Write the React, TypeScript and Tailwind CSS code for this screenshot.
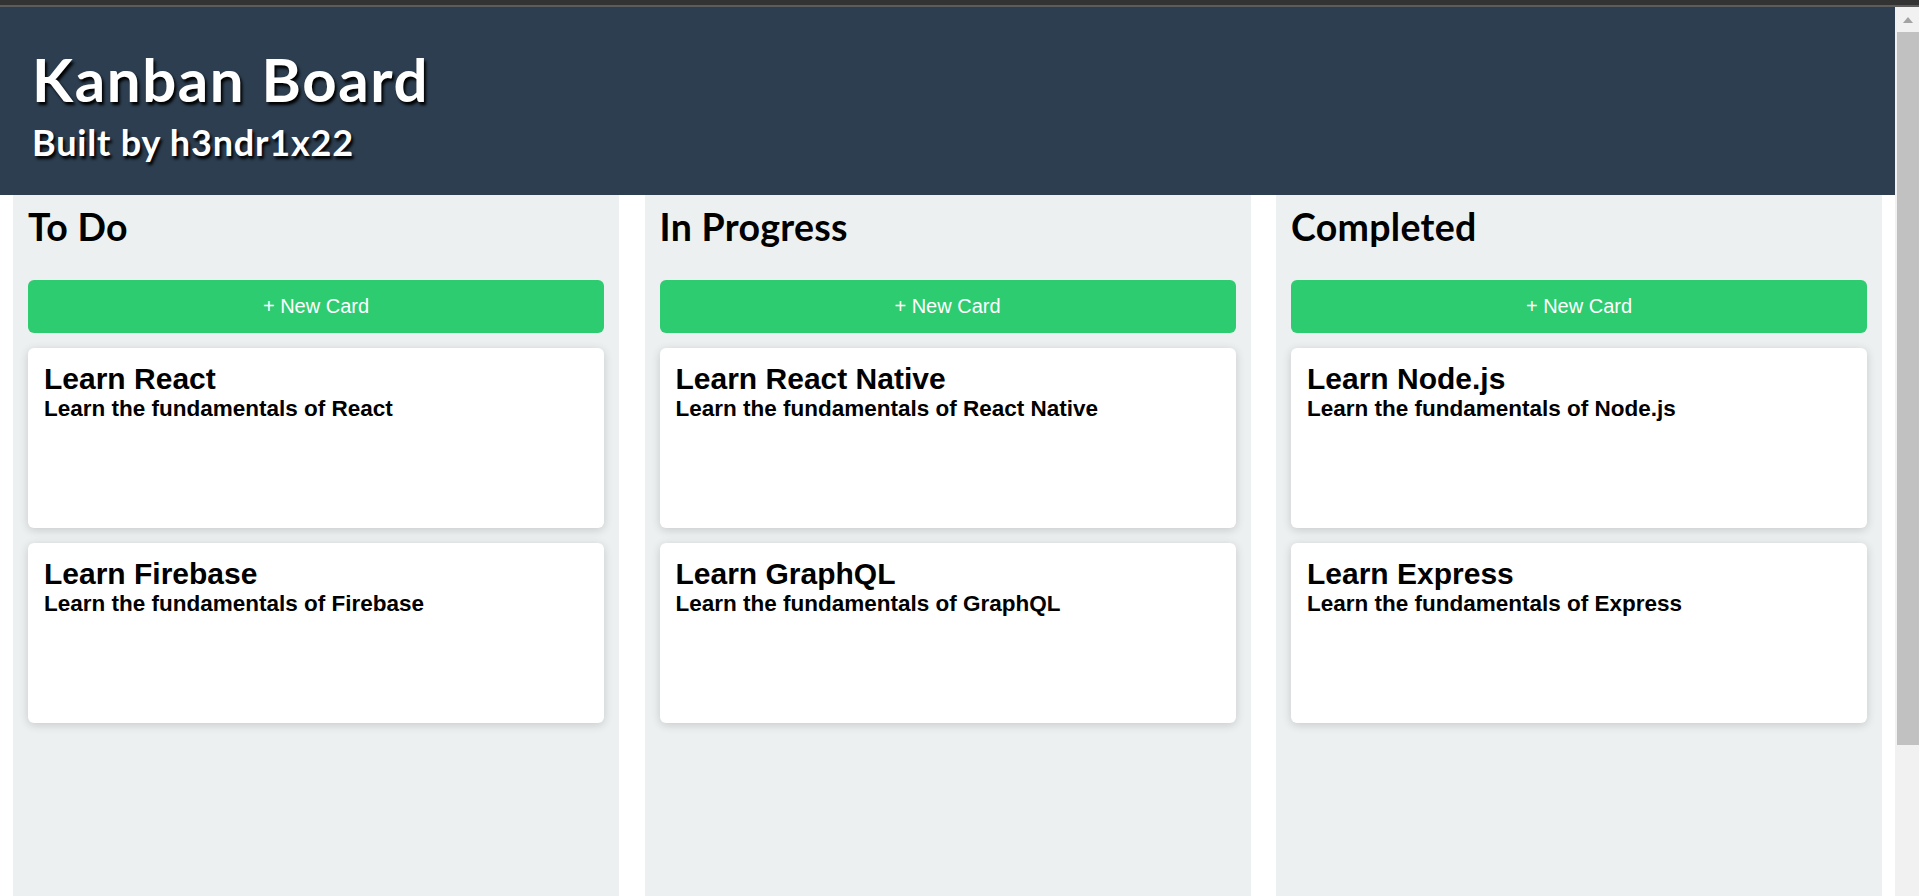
import React from 'react';

type Card = { title: string; description: string };
type Column = { name: string; cards: Card[] };

const columns: Column[] = [
  {
    name: 'To Do',
    cards: [
      { title: 'Learn React', description: 'Learn the fundamentals of React' },
      { title: 'Learn Firebase', description: 'Learn the fundamentals of Firebase' },
    ],
  },
  {
    name: 'In Progress',
    cards: [
      { title: 'Learn React Native', description: 'Learn the fundamentals of React Native' },
      { title: 'Learn GraphQL', description: 'Learn the fundamentals of GraphQL' },
    ],
  },
  {
    name: 'Completed',
    cards: [
      { title: 'Learn Node.js', description: 'Learn the fundamentals of Node.js' },
      { title: 'Learn Express', description: 'Learn the fundamentals of Express' },
    ],
  },
];

const App: React.FC = () => {
  return (
    <div className="flex h-[896px] w-full flex-col overflow-hidden bg-white">
      {/* Browser chrome strip */}
      <div className="h-[5px] bg-[#333333]" />
      <div className="h-[2px] bg-[#5c5c5c]" />

      <div className="flex min-h-0 flex-1">
        <div className="flex min-w-0 flex-1 flex-col">
          {/* Header */}
          <header className="h-[188px] shrink-0 bg-[#2c3e50] px-[32px] pt-[42px] font-['Lato','Open_Sans',sans-serif] font-bold text-white [text-shadow:2px_3px_3px_#000]">
            <h1 className="text-[60px] leading-[60px] tracking-[1.6px]">Kanban Board</h1>
            <h2 className="mt-[13px] text-[36px] leading-[40px] tracking-[0.8px]">Built by h3ndr1x22</h2>
          </header>

          {/* Board */}
          <main className="flex min-h-0 flex-1 gap-[25.5px] px-[13px]">
            {columns.map((column) => (
              <section key={column.name} className="flex flex-1 flex-col bg-[#ecf0f1] px-[15px]">
                <h2 className="mt-[12px] font-['Lato','Open_Sans',sans-serif] text-[37.5px] font-bold leading-[40px] tracking-[0.3px] text-black">
                  {column.name}
                </h2>
                <button className="mt-[33px] flex h-[53px] w-full items-center justify-center rounded-[6px] bg-[#2ecc71] pb-[2px] font-['Liberation_Sans',Arial,sans-serif] text-[20px] text-white">
                  + New Card
                </button>
                <div className="mt-[15px] flex flex-col gap-[15px]">
                  {column.cards.map((card) => (
                    <div
                      key={card.title}
                      className="h-[180px] rounded-[6px] bg-white px-[16px] pt-[14px] font-['Liberation_Sans',Arial,sans-serif] font-bold text-black shadow-[0_2px_10px_rgba(0,0,0,0.16)]"
                    >
                      <h3 className="text-[30px] leading-[34px]">{card.title}</h3>
                      <p className="text-[22.5px] leading-[26px]">{card.description}</p>
                    </div>
                  ))}
                </div>
              </section>
            ))}
          </main>
        </div>

        {/* Scrollbar */}
        <div className="flex w-[24px] shrink-0 flex-col bg-[#f1f1f1] pl-[2px]">
          <div className="flex h-[25px] items-center justify-center">
            <svg width="10" height="6" viewBox="0 0 10 6">
              <polygon points="5,0 10,6 0,6" fill="#a3a3a3" />
            </svg>
          </div>
          <div className="h-[713px] bg-[#c1c1c1]" />
        </div>
      </div>
    </div>
  );
};

export default App;
